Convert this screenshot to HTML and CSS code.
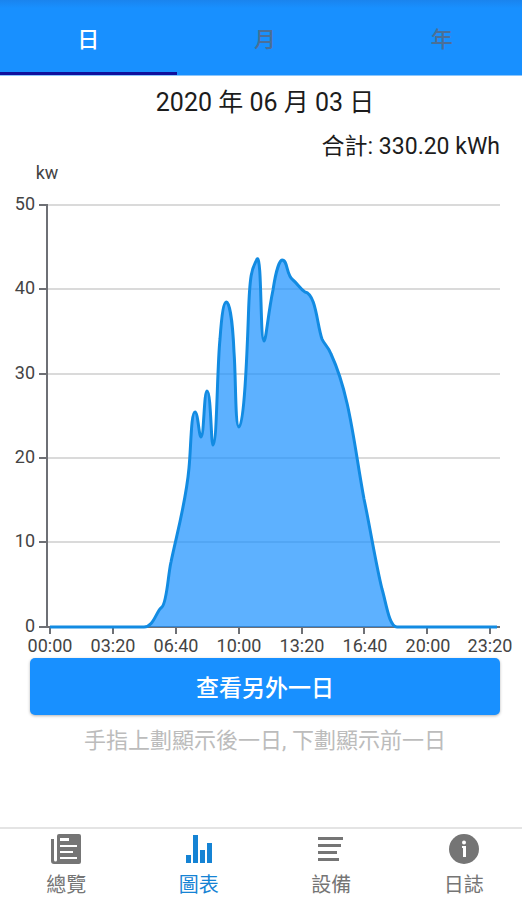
FILE: index.html
```html
<!DOCTYPE html>
<html lang="zh-Hant">
<head>
<meta charset="utf-8">
<meta name="viewport" content="width=device-width, initial-scale=1">
<title>圖表</title>
<link rel="stylesheet" href="styles.css">
</head>
<body>
<div class="app">
  <header class="tabs" role="tablist">
    <button class="tab tab-active" type="button" role="tab" aria-selected="true">日</button>
    <button class="tab" type="button" role="tab" aria-selected="false">月</button>
    <button class="tab" type="button" role="tab" aria-selected="false">年</button>
  </header>

  <main class="content">
    <h1 class="date">2020 年 06 月 03 日</h1>
    <p class="total">合計: 330.20 kWh</p>
    <svg class="chart" viewBox="0 163 522 495" role="img">
      <text class="axis-label" x="47" y="179" text-anchor="middle">kw</text>
      <path class="grid" d="M48 205H500M48 289H500M48 374H500M48 458H500M48 542H500"/>
      <path class="axis" d="M47 204V627M39 205H47M39 289H47M39 374H47M39 458H47M39 542H47M39 627H500M50 627V634M113 627V634M176 627V634M239 627V634M302 627V634M364 627V634M427 627V634M490 627V634"/>
      <path class="area" d="M50 627H144C154 627 156 611 162 607C167 602 168 575 171 562C177 533 186 502 189 468C191 448 191 412 195 412C198 412 199 437 201 437C204 437 204 391 207 391C211 391 211 445 213 445C217 445 217 369 220 339C222 311 224 302 226.500 302C230 302 233 329 234 352C236 378 235 427 239 427C244 427 247 356 248.500 313C250 267 253 268 257 259C262 254 260 341 264 341C266 341 268 314 273 290C276 270 280 260 282 260C288 260 286 275 293 280C298 284 300 289 305 292C316 294 317 325 322 339C324 344 328 346 331 354C350 395 354 445 364 499C370 527 376 565 382 589C386 602 389 627 397 627Z"/>
      <path class="line" d="M50 627H144C154 627 156 611 162 607C167 602 168 575 171 562C177 533 186 502 189 468C191 448 191 412 195 412C198 412 199 437 201 437C204 437 204 391 207 391C211 391 211 445 213 445C217 445 217 369 220 339C222 311 224 302 226.500 302C230 302 233 329 234 352C236 378 235 427 239 427C244 427 247 356 248.500 313C250 267 253 268 257 259C262 254 260 341 264 341C266 341 268 314 273 290C276 270 280 260 282 260C288 260 286 275 293 280C298 284 300 289 305 292C316 294 317 325 322 339C324 344 328 346 331 354C350 395 354 445 364 499C370 527 376 565 382 589C386 602 389 627 397 627H497"/>
      <g class="axis-label" text-anchor="end">
        <text x="35" y="210">50</text>
        <text x="35" y="294">40</text>
        <text x="35" y="379">30</text>
        <text x="35" y="463">20</text>
        <text x="35" y="547">10</text>
        <text x="35" y="632">0</text>
      </g>
      <g class="axis-label" text-anchor="middle">
        <text x="50" y="652">00:00</text>
        <text x="113" y="652">03:20</text>
        <text x="176" y="652">06:40</text>
        <text x="239" y="652">10:00</text>
        <text x="302" y="652">13:20</text>
        <text x="365" y="652">16:40</text>
        <text x="428" y="652">20:00</text>
        <text x="490" y="652">23:20</text>
      </g>
    </svg>
    <button class="pick" type="button">查看另外一日</button>
    <p class="hint">手指上劃顯示後一日, 下劃顯示前一日</p>
  </main>

  <nav class="bottom-nav">
    <a class="nav-item" href="#overview">
      <svg class="icon" viewBox="0 0 32 32" fill="currentColor"><path fill-rule="evenodd" d="M9 1H29a2 2 0 0 1 2 2V29a2 2 0 0 1-2 2H4a3 3 0 0 1-3-3V6H4V27a1 1 0 0 0 3 0V3a2 2 0 0 1 2-2ZM10 5V8H19V5ZM10 12V14H27V12ZM10 18V20H23V18ZM10 24V26H27V24Z"/></svg>
      <span>總覽</span>
    </a>
    <a class="nav-item nav-active" href="#chart" aria-current="page">
      <svg class="icon" viewBox="0 0 32 32" fill="currentColor"><path d="M3 22H8V30H3ZM10 2H15V30H10ZM17 17H22V30H17ZM24 10H29V30H24Z"/></svg>
      <span>圖表</span>
    </a>
    <a class="nav-item" href="#devices">
      <svg class="icon" viewBox="0 0 32 32" fill="currentColor"><path d="M3 4H28V7H3ZM3 11H26V14H3ZM3 18H22V21H3ZM3 25H24V28H3Z"/></svg>
      <span>設備</span>
    </a>
    <a class="nav-item" href="#log">
      <svg class="icon" viewBox="0 0 32 32"><circle cx="16" cy="16" r="15" fill="currentColor"/><circle cx="16" cy="9.500" r="2" fill="#fff"/><path d="M14 13H18V24H15V15H14Z" fill="#fff"/></svg>
      <span>日誌</span>
    </a>
  </nav>
</div>
</body>
</html>
```
FILE: styles.css
```css
* {
  box-sizing: border-box;
}

body {
  margin: 0;
  background: #fff;
  color: #1c1c1c;
  font-family: Roboto, "Noto Sans CJK TC", sans-serif;
}

.app {
  display: flex;
  flex-direction: column;
  min-height: 100vh;
  overflow-x: hidden;
}

/* The bars run 8px past the right edge, so their cells share the centre line of the content. */
.tabs,
.bottom-nav {
  display: grid;
  margin-right: -8px;
}

.tabs {
  grid-template-columns: repeat(3, 1fr);
  background: linear-gradient(#1a84ee, #1890ff 8px);
  border-bottom: 1px solid #8cc6fb;
}

.tab {
  height: 75px;
  padding: 8px 0 0;
  border: 0;
  border-bottom: 3px solid transparent;
  background: none;
  color: #4c6f96;
  font: 500 22px/32px Roboto, "Noto Sans CJK TC", sans-serif;
}

.tab-active {
  border-bottom-color: #10109c;
  color: #fff;
}

.content {
  flex: 1;
  display: flex;
  flex-direction: column;
}

.date {
  margin: 7px 0 0 8px;
  font-size: 25px;
  font-weight: 400;
  line-height: 40px;
  text-align: center;
}

.total {
  margin: 8px 22px 0 0;
  font-size: 23px;
  line-height: 32px;
  text-align: right;
}

.chart {
  display: block;
  width: 100%;
}

.axis-label {
  fill: #444;
  font-size: 18px;
}

.grid,
.axis,
.line {
  fill: none;
}

.grid {
  stroke: #dadada;
  stroke-width: 2;
}

.axis {
  stroke: #6e7075;
  stroke-width: 2;
}

.area {
  fill: #1890ff;
  fill-opacity: 0.7;
}

.line {
  stroke: #128be2;
  stroke-width: 3;
  stroke-linejoin: round;
}

.pick {
  height: 57px;
  margin: 0 22px 0 30px;
  padding: 4px 0 0;
  border: 0;
  border-radius: 5px;
  background: #1890ff;
  box-shadow: 0 1px 3px rgba(0, 0, 0, 0.3);
  color: #fff;
  font: 500 23px/32px Roboto, "Noto Sans CJK TC", sans-serif;
}

.hint {
  margin: 10px 0 0 8px;
  color: #bcbcbc;
  font-size: 22px;
  line-height: 32px;
  text-align: center;
}

.bottom-nav {
  grid-template-columns: repeat(4, 1fr);
  height: 73px;
  border-top: 2px solid #e4e4e4;
}

.nav-item {
  display: flex;
  flex-direction: column;
  align-items: center;
  padding-top: 4px;
  color: #757575;
  font-size: 20px;
  line-height: 28px;
  text-decoration: none;
}

.nav-item span {
  margin-top: 6px;
}

.nav-active {
  color: #1583d4;
}

.icon {
  width: 32px;
  height: 32px;
}
```
